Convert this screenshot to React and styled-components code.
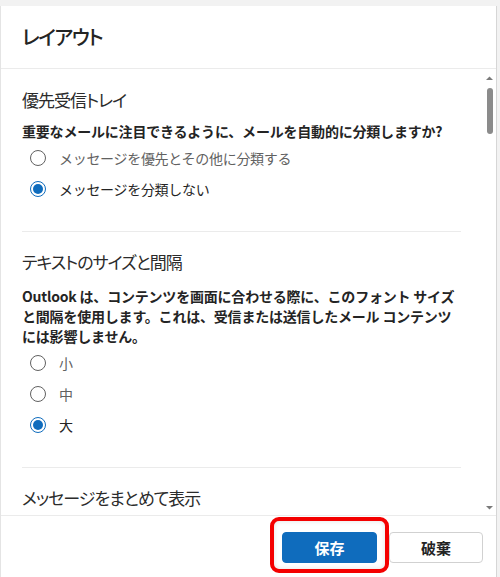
import styled, { createGlobalStyle } from "styled-components";

const GlobalStyle = createGlobalStyle`
    html, body {
        margin: 0;
        padding: 0;
        background: #f2f2f2;
    }
    body {
        font-family: "Noto Sans CJK JP", "Noto Sans", sans-serif;
        color: #242424;
    }
`;

const Page = styled.div`
    height: 577px;
    padding-top: 6px;
    box-sizing: border-box;
    background: #f2f2f2;
    display: flex;
`;

const Dialog = styled.div`
    width: 497px;
    height: 571px;
    background: #ffffff;
    border-left: 1px solid #e4e4e4;
    border-right: 1px solid #d6d6d6;
    box-sizing: border-box;
    display: flex;
    flex-direction: column;
`;

const Header = styled.header`
    height: 63px;
    flex-shrink: 0;
    display: flex;
    align-items: center;
    padding-left: 21px;
    border-bottom: 1px solid #ebebeb;
    box-sizing: border-box;
`;

const Title = styled.h1`
    margin: 0;
    font-size: 20px;
    font-weight: 500;
    line-height: 28px;
    letter-spacing: -1.4px;
    font-feature-settings: "palt";
    color: #242424;
`;

const Body = styled.div`
    flex: 1;
    display: flex;
    overflow: hidden;
`;

const Content = styled.div`
    flex: 1;
    padding: 0 22px 0 21px;
    overflow: hidden;
`;

const Section = styled.section`
    padding: ${(props) => (props.$first ? "19px" : "18px")} 0 27px;
    border-bottom: ${(props) => (props.$last ? "none" : "1px solid #ebebeb")};
`;

const SectionTitle = styled.h2`
    margin: 0;
    font-size: 17px;
    font-weight: 400;
    line-height: 24px;
    letter-spacing: -1px;
    font-feature-settings: "palt";
    color: #2b2b2b;
`;

const Description = styled.p`
    margin: ${(props) => props.$gap || "9px"} 0 1px;
    font-size: 14px;
    font-weight: 700;
    line-height: 20px;
    letter-spacing: -0.2px;
    white-space: nowrap;
    color: #242424;
`;

const RadioRow = styled.label`
    height: 31px;
    display: flex;
    align-items: center;
    gap: 13px;
    padding-left: 8px;
    font-size: 14px;
    line-height: 20px;
    letter-spacing: -0.3px;
    color: ${(props) => (props.$checked ? "#242424" : "#616161")};
`;

const RadioCircle = styled.span`
    width: 16px;
    height: 16px;
    box-sizing: border-box;
    border-radius: 50%;
    border: 1px solid ${(props) => (props.$checked ? "#0f6cbd" : "#616161")};
    display: flex;
    align-items: center;
    justify-content: center;
    flex-shrink: 0;

    &::after {
        content: "";
        width: 10px;
        height: 10px;
        border-radius: 50%;
        background: #0f6cbd;
        display: ${(props) => (props.$checked ? "block" : "none")};
    }
`;

const ScrollTrack = styled.div`
    width: 13px;
    flex-shrink: 0;
    display: flex;
    flex-direction: column;
    align-items: center;
    padding: 7px 0 5px;
    box-sizing: border-box;
`;

const ScrollThumb = styled.div`
    width: 6px;
    height: 46px;
    margin-top: 7px;
    border-radius: 3px;
    background: #8b8b8b;
`;

const Spacer = styled.div`
    flex: 1;
`;

const Footer = styled.footer`
    flex-shrink: 0;
    display: flex;
    align-items: flex-start;
    justify-content: flex-end;
    gap: 12px;
    padding: 16px 13px 0 0;
    height: 62px;
    box-sizing: border-box;
    border-top: 1px solid #ebebeb;
`;

const Highlight = styled.div`
    position: relative;
    display: flex;

    &::after {
        content: "";
        position: absolute;
        top: -15px;
        left: -12px;
        right: -12px;
        bottom: -10px;
        border: 4px solid #f40000;
        border-radius: 9px;
        box-shadow: inset 0 0 5px rgba(0, 0, 0, 0.12);
        pointer-events: none;
    }
`;

const Button = styled.button`
    width: ${(props) => (props.$primary ? "95px" : "94px")};
    height: 31px;
    border-radius: 4px;
    border: 1px solid ${(props) => (props.$primary ? "#0f6cbd" : "#d1d1d1")};
    background: ${(props) => (props.$primary ? "#0f6cbd" : "#ffffff")};
    color: ${(props) => (props.$primary ? "#ffffff" : "#242424")};
    font-family: "Noto Sans CJK JP", "Noto Sans", sans-serif;
    font-size: 15px;
    font-weight: 700;
    padding: 0;
    cursor: pointer;
`;

const Arrow = ({ down }) => (
    <svg width="7" height="5" viewBox="0 0 7 5" aria-hidden="true">
        <path d={down ? "M0 1h7L3.5 4.5z" : "M0 4h7L3.5 0.5z"} fill="#7a7a7a" />
    </svg>
);

const Radio = ({ label, checked }) => (
    <RadioRow $checked={checked}>
        <RadioCircle $checked={checked} />
        {label}
    </RadioRow>
);

const App = () => {
    return (
        <>
            <GlobalStyle />
            <Page>
                <Dialog>
                    <Header>
                        <Title>レイアウト</Title>
                    </Header>
                    <Body>
                        <Content>
                            <Section $first>
                                <SectionTitle>優先受信トレイ</SectionTitle>
                                <Description>
                                    重要なメールに注目できるように、メールを自動的に分類しますか?
                                </Description>
                                <Radio label="メッセージを優先とその他に分類する" />
                                <Radio label="メッセージを分類しない" checked />
                            </Section>
                            <Section>
                                <SectionTitle>テキストのサイズと間隔</SectionTitle>
                                <Description $gap="12px">
                                    Outlook は、コンテンツを画面に合わせる際に、このフォント サイズ
                                    <br />
                                    と間隔を使用します。これは、受信または送信したメール コンテンツ
                                    <br />
                                    には影響しません。
                                </Description>
                                <Radio label="小" />
                                <Radio label="中" />
                                <Radio label="大" checked />
                            </Section>
                            <Section $last>
                                <SectionTitle>メッセージをまとめて表示</SectionTitle>
                            </Section>
                        </Content>
                        <ScrollTrack>
                            <Arrow />
                            <ScrollThumb />
                            <Spacer />
                            <Arrow down />
                        </ScrollTrack>
                    </Body>
                    <Footer>
                        <Highlight>
                            <Button $primary>保存</Button>
                        </Highlight>
                        <Button>破棄</Button>
                    </Footer>
                </Dialog>
            </Page>
        </>
    );
};

export default App;
